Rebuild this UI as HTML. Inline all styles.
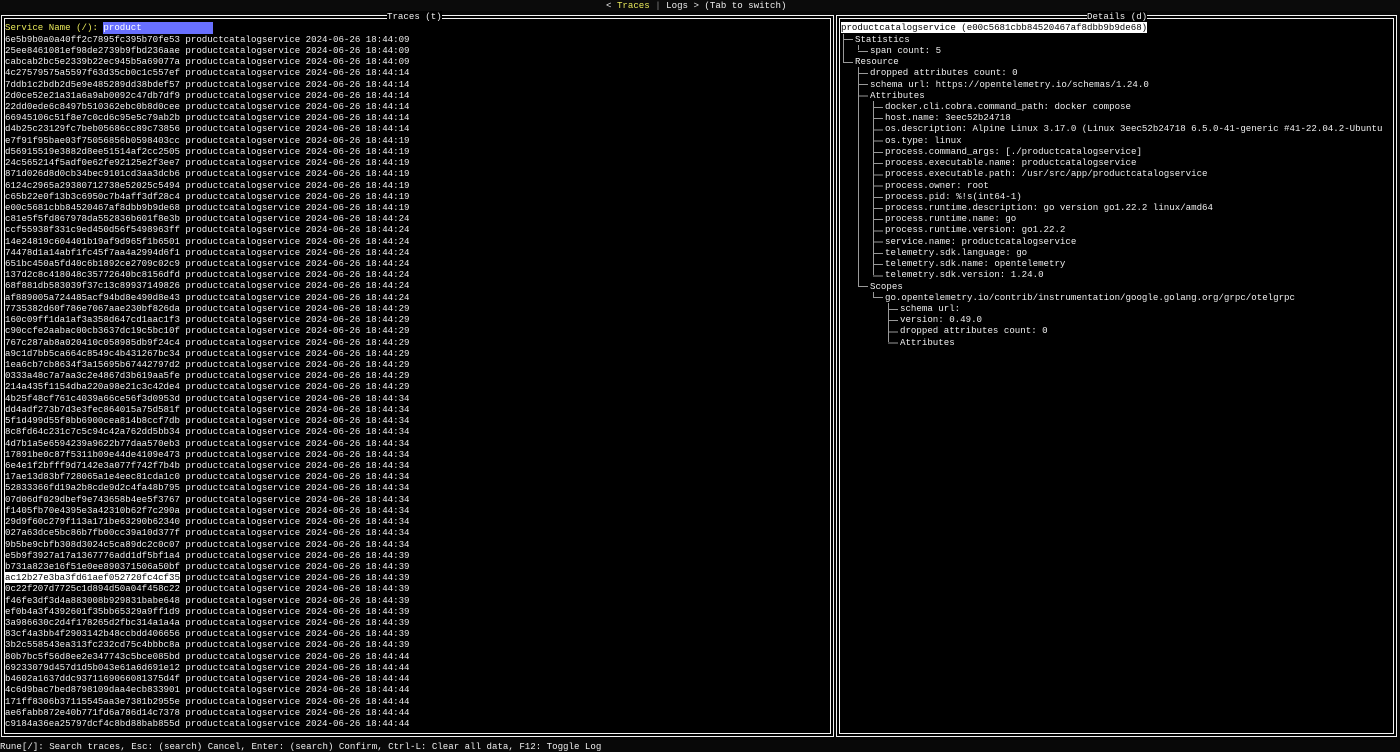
<!DOCTYPE html>
<html><head><meta charset="utf-8">
<style>
*{margin:0;padding:0;box-sizing:border-box}
html,body{width:1400px;height:752px;overflow:hidden;background:#080808}
body{position:relative;font-family:"Liberation Mono",monospace;font-size:9.12px;line-height:11.22px;color:#eee;white-space:pre}
.box{position:absolute;border:4px double #f2f2f2;background:#000}
.title{position:absolute;top:11.22px;background:#000;color:#eee;height:11.22px}
.t{position:absolute}
.y{color:#e8e85a}
#list{position:absolute;left:5px;top:33.66px}
.sel{background:#fff;color:#000}
.v{position:absolute;width:1px;background:#999}
.h{position:absolute;height:1px;background:#999}
.hr{position:absolute;width:10px;background:repeating-linear-gradient(to bottom,#999 0,#999 1px,transparent 1px,transparent 11.22px)}
</style></head><body>
<div class="t" style="left:0;top:0;width:1400px;height:11.22px;background:#0b0b0b"></div>
<div class="t" style="left:606px;top:0">&lt; <span class="y">Traces</span> <span style="color:#888">|</span> Logs &gt; (Tab to switch)</div>

<div class="box" style="left:1px;top:15px;width:833px;height:722px"></div>
<div class="box" style="left:836px;top:15px;width:561px;height:722px"></div>
<div class="title" style="left:387px">Traces (t)</div>
<div class="title" style="left:1087px">Details (d)</div>

<div class="t" style="left:5px;top:22.44px"><span class="y">Service Name (/): </span><span style="background:#6870ff;color:#fff;display:inline-block;width:109.4px">product</span></div>

<div id="list">6e5b9b0a0a40ff2c7895fc395b70fe53 productcatalogservice 2024-06-26 18:44:09
25ee8461081ef98de2739b9fbd236aae productcatalogservice 2024-06-26 18:44:09
cabcab2bc5e2339b22ec945b5a69077a productcatalogservice 2024-06-26 18:44:09
4c27579575a5597f63d35cb0c1c557ef productcatalogservice 2024-06-26 18:44:14
7ddb1c2bdb2d5e9e485289dd38bdef57 productcatalogservice 2024-06-26 18:44:14
2d0ce52e21a31a6a9ab0092c47db7df9 productcatalogservice 2024-06-26 18:44:14
22dd0ede6c8497b510362ebc0b8d0cee productcatalogservice 2024-06-26 18:44:14
66945106c51f8e7c0cd6c95e5c79ab2b productcatalogservice 2024-06-26 18:44:14
d4b25c23129fc7beb05686cc89c73856 productcatalogservice 2024-06-26 18:44:14
e7f91f95bae03f75056856b0598403cc productcatalogservice 2024-06-26 18:44:19
d56915519e3882d8ee51514af2cc2505 productcatalogservice 2024-06-26 18:44:19
24c565214f5adf0e62fe92125e2f3ee7 productcatalogservice 2024-06-26 18:44:19
871d026d8d0cb34bec9101cd3aa3dcb6 productcatalogservice 2024-06-26 18:44:19
6124c2965a29380712738e52025c5494 productcatalogservice 2024-06-26 18:44:19
c65b22e0f13b3c6950c7b4aff3df28c4 productcatalogservice 2024-06-26 18:44:19
e00c5681cbb84520467af8dbb9b9de68 productcatalogservice 2024-06-26 18:44:19
c81e5f5fd867978da552836b601f8e3b productcatalogservice 2024-06-26 18:44:24
ccf55938f331c9ed450d56f5498963ff productcatalogservice 2024-06-26 18:44:24
14e24819c604401b19af9d965f1b6501 productcatalogservice 2024-06-26 18:44:24
74478d1a14abf1fc45f7aa4a2994d6f1 productcatalogservice 2024-06-26 18:44:24
651bc450a5fd40c6b1892ce2709c02c9 productcatalogservice 2024-06-26 18:44:24
137d2c8c418048c35772640bc8156dfd productcatalogservice 2024-06-26 18:44:24
68f881db583039f37c13c89937149826 productcatalogservice 2024-06-26 18:44:24
af889005a724485acf94bd8e490d8e43 productcatalogservice 2024-06-26 18:44:24
7735382d60f786e7067aae230bf826da productcatalogservice 2024-06-26 18:44:29
160c09ff1da1af3a358d647cd1aac1f3 productcatalogservice 2024-06-26 18:44:29
c90ccfe2aabac00cb3637dc19c5bc10f productcatalogservice 2024-06-26 18:44:29
767c287ab8a020410c058985db9f24c4 productcatalogservice 2024-06-26 18:44:29
a9c1d7bb5ca664c8549c4b431267bc34 productcatalogservice 2024-06-26 18:44:29
1ea6cb7cb8634f3a15695b67442797d2 productcatalogservice 2024-06-26 18:44:29
0333a48c7a7aa3c2e4867d3b619aa5fe productcatalogservice 2024-06-26 18:44:29
214a435f1154dba220a98e21c3c42de4 productcatalogservice 2024-06-26 18:44:29
4b25f48cf761c4039a66ce56f3d0953d productcatalogservice 2024-06-26 18:44:34
dd4adf273b7d3e3fec864015a75d581f productcatalogservice 2024-06-26 18:44:34
5f1d499d55f8bb6900cea814b8ccf7db productcatalogservice 2024-06-26 18:44:34
8c8fd64c231c7c5c94c42a762dd5bb34 productcatalogservice 2024-06-26 18:44:34
4d7b1a5e6594239a9622b77daa570eb3 productcatalogservice 2024-06-26 18:44:34
17891be0c87f5311b09e44de4109e473 productcatalogservice 2024-06-26 18:44:34
6e4e1f2bfff9d7142e3a077f742f7b4b productcatalogservice 2024-06-26 18:44:34
17ae13d83bf728065a1e4eec81cda1c0 productcatalogservice 2024-06-26 18:44:34
52833366fd19a2b8cde9d2c4fa48b795 productcatalogservice 2024-06-26 18:44:34
07d06df029dbef9e743658b4ee5f3767 productcatalogservice 2024-06-26 18:44:34
f1405fb70e4395e3a42310b62f7c290a productcatalogservice 2024-06-26 18:44:34
29d9f60c279f113a171be63290b62340 productcatalogservice 2024-06-26 18:44:34
027a63dce5bc86b7fb00cc39a10d377f productcatalogservice 2024-06-26 18:44:34
9b5be9cbfb308d3024c5ca89dc2c0c07 productcatalogservice 2024-06-26 18:44:34
e5b9f3927a17a1367776add1df5bf1a4 productcatalogservice 2024-06-26 18:44:39
b731a823e16f51e0ee890371506a50bf productcatalogservice 2024-06-26 18:44:39
<span class="sel">ac12b27e3ba3fd61aef052720fc4cf35</span> productcatalogservice 2024-06-26 18:44:39
0c22f207d7725c1d894d50a04f458c22 productcatalogservice 2024-06-26 18:44:39
f46fe3df3d4a883008b929831babe648 productcatalogservice 2024-06-26 18:44:39
ef0b4a3f4392601f35bb65329a9ff1d9 productcatalogservice 2024-06-26 18:44:39
3a986630c2d4f178265d2fbc314a1a4a productcatalogservice 2024-06-26 18:44:39
83cf4a3bb4f2903142b48ccbdd406656 productcatalogservice 2024-06-26 18:44:39
3b2c558543ea313fc232cd75c4bbbc8a productcatalogservice 2024-06-26 18:44:39
80b7bc5f56d8ee2e347743c5bce085bd productcatalogservice 2024-06-26 18:44:44
69233079d457d1d5b043e61a6d691e12 productcatalogservice 2024-06-26 18:44:44
b4602a1637ddc9371169066081375d4f productcatalogservice 2024-06-26 18:44:44
4c6d9bac7bed8798109daa4ecb833901 productcatalogservice 2024-06-26 18:44:44
171ff8306b37115545aa3e7381b2955e productcatalogservice 2024-06-26 18:44:44
ae6fabb872e40b771fd6a786d14c7378 productcatalogservice 2024-06-26 18:44:44
c9184a36ea25797dcf4c8bd88bab855d productcatalogservice 2024-06-26 18:44:44</div>

<!-- details tree lines -->
<div class="v" style="left:843px;top:33.7px;height:28px"></div>
<div class="h" style="left:843px;top:39.3px;width:10px"></div>
<div class="h" style="left:843px;top:61.7px;width:10px"></div>
<div class="v" style="left:858px;top:44.9px;height:5.6px"></div>
<div class="h" style="left:858px;top:50.5px;width:10px"></div>
<div class="v" style="left:858px;top:67.3px;height:218.8px"></div>
<div class="hr" style="left:858px;top:72.9px;height:30px"></div>
<div class="h" style="left:858px;top:286.1px;width:10px"></div>
<div class="v" style="left:873px;top:101px;height:173.9px"></div>
<div class="hr" style="left:873px;top:106.6px;height:170px"></div>
<div class="v" style="left:873px;top:291.7px;height:5.6px"></div>
<div class="h" style="left:873px;top:297.3px;width:10px"></div>
<div class="v" style="left:888px;top:302.9px;height:39.3px"></div>
<div class="hr" style="left:888px;top:308.5px;height:36px"></div>

<div class="t" style="left:841px;top:22.44px"><span class="sel">productcatalogservice (e00c5681cbb84520467af8dbb9b9de68)</span></div>
<div class="t" style="left:855px;top:33.66px">Statistics</div>
<div class="t" style="left:870px;top:44.88px">span count: 5</div>
<div class="t" style="left:855px;top:56.1px">Resource</div>
<div class="t" style="left:870px;top:67.32px">dropped attributes count: 0
schema url: https://opentelemetry.io/schemas/1.24.0
Attributes</div>
<div class="t" style="left:885px;top:100.98px">docker.cli.cobra.command_path: docker compose
host.name: 3eec52b24718
os.description: Alpine Linux 3.17.0 (Linux 3eec52b24718 6.5.0-41-generic #41-22.04.2-Ubuntu
os.type: linux
process.command_args: [./productcatalogservice]
process.executable.name: productcatalogservice
process.executable.path: /usr/src/app/productcatalogservice
process.owner: root
process.pid: %!s(int64-1)
process.runtime.description: go version go1.22.2 linux/amd64
process.runtime.name: go
process.runtime.version: go1.22.2
service.name: productcatalogservice
telemetry.sdk.language: go
telemetry.sdk.name: opentelemetry
telemetry.sdk.version: 1.24.0</div>
<div class="t" style="left:870px;top:280.5px">Scopes</div>
<div class="t" style="left:885px;top:291.72px">go.opentelemetry.io/contrib/instrumentation/google.golang.org/grpc/otelgrpc</div>
<div class="t" style="left:900px;top:302.94px">schema url:
version: 0.49.0
dropped attributes count: 0
Attributes</div>

<div class="t" style="left:0;top:740.5px">Rune[/]: Search traces, Esc: (search) Cancel, Enter: (search) Confirm, Ctrl-L: Clear all data, F12: Toggle Log</div>
</body></html>
